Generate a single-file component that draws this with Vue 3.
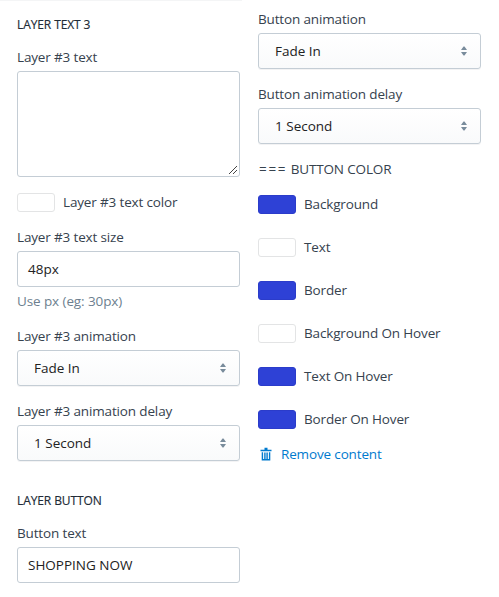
<script setup>
const colors = [
  { label: 'Background', fill: true },
  { label: 'Text', fill: false },
  { label: 'Border', fill: true },
  { label: 'Background On Hover', fill: false },
  { label: 'Text On Hover', fill: true },
  { label: 'Border On Hover', fill: true },
]
</script>

<template>
  <main class="panel">
    <section class="col left">
      <h2 class="heading">LAYER TEXT 3</h2>
      <div class="field">
        <label class="label">Layer #3 text</label>
        <div class="control area">
          <svg class="grip" width="10" height="10" viewBox="0 0 10 10"><path d="M1 9 9 1M5 9 9 5" stroke="#444" fill="none" /></svg>
        </div>
      </div>
      <div class="color-row">
        <span class="swatch"></span><span class="label">Layer #3 text color</span>
      </div>
      <div class="field">
        <label class="label">Layer #3 text size</label>
        <div class="control input">48px</div>
        <p class="help">Use px (eg: 30px)</p>
      </div>
      <div class="field">
        <label class="label">Layer #3 animation</label>
        <div class="control select">
          <span>Fade In</span>
          <svg class="arrows" width="8" height="10" viewBox="0 0 8 10"><path d="M1 4 3.5 .5h1L7 4ZM1 6 3.5 9.5h1L7 6Z" fill="#798c9c" /></svg>
        </div>
      </div>
      <div class="field">
        <label class="label">Layer #3 animation delay</label>
        <div class="control select">
          <span>1 Second</span>
          <svg class="arrows" width="8" height="10" viewBox="0 0 8 10"><path d="M1 4 3.5 .5h1L7 4ZM1 6 3.5 9.5h1L7 6Z" fill="#798c9c" /></svg>
        </div>
      </div>
      <h2 class="heading">LAYER BUTTON</h2>
      <div class="field">
        <label class="label">Button text</label>
        <div class="control input">SHOPPING NOW</div>
      </div>
    </section>

    <section class="col right">
      <div class="field">
        <label class="label">Button animation</label>
        <div class="control select">
          <span>Fade In</span>
          <svg class="arrows" width="8" height="10" viewBox="0 0 8 10"><path d="M1 4 3.5 .5h1L7 4ZM1 6 3.5 9.5h1L7 6Z" fill="#798c9c" /></svg>
        </div>
      </div>
      <div class="field">
        <label class="label">Button animation delay</label>
        <div class="control select">
          <span>1 Second</span>
          <svg class="arrows" width="8" height="10" viewBox="0 0 8 10"><path d="M1 4 3.5 .5h1L7 4ZM1 6 3.5 9.5h1L7 6Z" fill="#798c9c" /></svg>
        </div>
      </div>
      <p class="label group"><span class="equals">===</span> <span class="caps">BUTTON COLOR</span></p>
      <div class="colors">
        <div v-for="c in colors" :key="c.label" class="color-row">
          <span class="swatch" :class="{ blue: c.fill }"></span><span class="label">{{ c.label }}</span>
        </div>
      </div>
      <a class="remove">
        <svg width="12" height="14" viewBox="0 0 12 14">
          <path d="M4.5 .8h3v1.9h4v1.6H.5V2.7h4Z" fill="#007ace" />
          <path d="M2.4 5.2v7.6h7.2V5.2M4.9 5.5v7M7.1 5.5v7" fill="none" stroke="#007ace" stroke-width="1.4" />
        </svg>
        <span>Remove content</span>
      </a>
    </section>
  </main>
</template>

<style>
body {
  margin: 0;
  background: #fff;
}
</style>

<style scoped>
.panel {
  box-sizing: border-box;
  display: flex;
  gap: 18px;
  width: 499px;
  height: 597px;
  padding-left: 17px;
  overflow: hidden;
  background: linear-gradient(#f4f5f6, #f4f5f6) 0 0 / 242px 1px no-repeat #fff;
  font: 13.5px/20px "Open Sans", "Noto Sans", sans-serif;
  color: #36424e;
}
.col {
  display: flex;
  flex-direction: column;
  gap: 15px;
  width: 223px;
}
.right {
  padding-top: 9px;
}
.heading {
  height: 20px;
  margin: 15px 0 -3px;
  font-size: 12px;
  line-height: 20px;
  font-weight: 500;
  letter-spacing: -0.1px;
  -webkit-text-stroke: 0.15px currentColor;
  color: #212b36;
}
.label {
  display: block;
  height: 20px;
  margin: 0;
  letter-spacing: -0.15px;
  white-space: nowrap;
}
.control {
  box-sizing: border-box;
  display: flex;
  align-items: center;
  width: 223px;
  height: 36px;
  margin-top: 4px;
  border: 1px solid #c4cdd5;
  border-radius: 3px;
  color: #222;
}
.input {
  padding-left: 10px;
}
.area {
  height: 106px;
  margin-bottom: 1px;
  align-items: flex-end;
  justify-content: flex-end;
}
.grip {
  margin: 0 1px 1px 0;
}
.select {
  justify-content: space-between;
  padding: 0 12px 0 16px;
  background: linear-gradient(#fff, #f9fafb);
  box-shadow: 0 1px 0 rgba(22, 29, 37, 0.05);
}
.equals {
  margin-left: 1px;
  letter-spacing: 1.7px;
}
.caps {
  letter-spacing: -0.15px;
}
.help {
  height: 20px;
  margin: 4px 0 0;
  letter-spacing: -0.1px;
  color: #6d7f8f;
}
.color-row {
  display: flex;
  align-items: flex-start;
  gap: 8px;
  height: 19px;
}
.color-row .label {
  margin-top: -1px;
}
.swatch {
  box-sizing: border-box;
  width: 38px;
  height: 19px;
  border: 1px solid #e3e4e5;
  border-radius: 3px;
}
.blue {
  border-color: #2b3cca;
  background: #2e41d6;
}
.colors {
  display: flex;
  flex-direction: column;
  gap: 24px;
  margin-top: 1px;
}
.remove {
  display: flex;
  align-items: center;
  gap: 9px;
  padding-left: 2px;
  letter-spacing: -0.15px;
  color: #007ace;
}
</style>
